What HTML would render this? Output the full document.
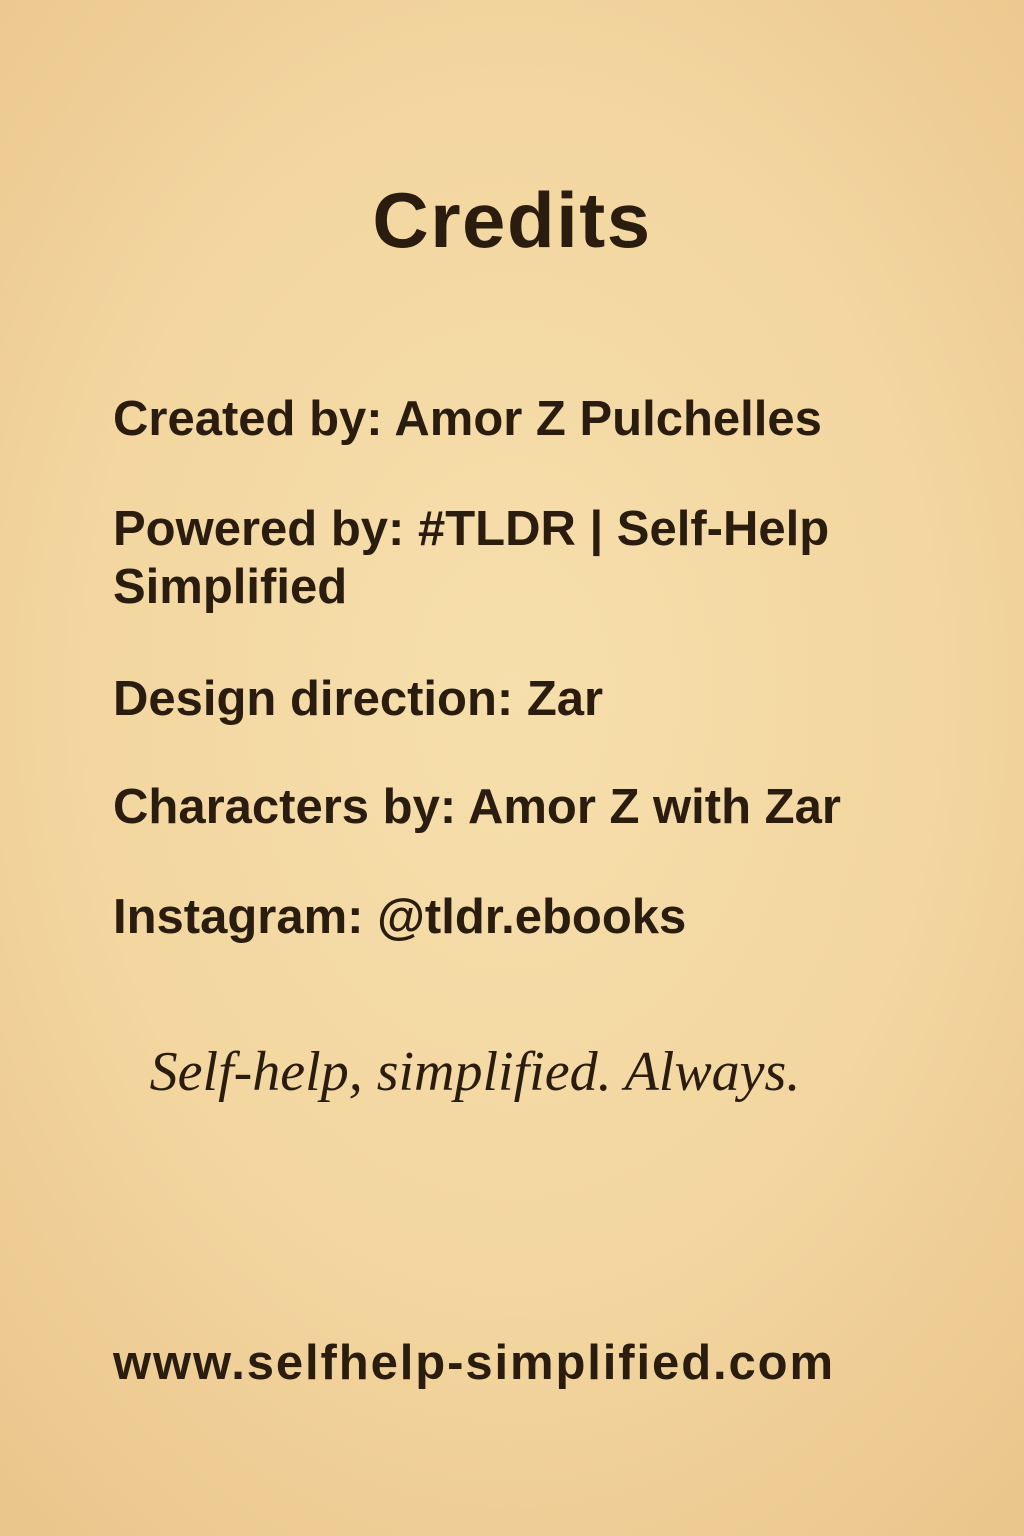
<!DOCTYPE html>
<html><head><meta charset="utf-8"><style>
html,body{margin:0;padding:0}
body{width:1024px;height:1536px;position:relative;overflow:hidden;
background:radial-gradient(ellipse 75% 70% at 50% 45%,#f6dfac 0%,#f3d6a0 55%,#eac68c 100%);
font-family:"Liberation Sans",sans-serif;color:#2a1d10}
.t{position:absolute;white-space:nowrap}
h1{position:absolute;top:181px;left:0;width:1024px;text-align:center;margin:0;font-size:78px;font-weight:bold;line-height:1;letter-spacing:1.5px}
.l{left:113px;font-size:49px;font-weight:bold;line-height:1;letter-spacing:0}
.q{left:0;width:950px;text-align:center;font-family:"Liberation Serif",serif;font-style:italic;font-size:56px;line-height:1}
</style></head><body>
<h1>Credits</h1>
<div class="t l" style="top:395px">Created by: Amor Z Pulchelles</div>
<div class="t l" style="top:505px">Powered by: #TLDR | Self-Help</div>
<div class="t l" style="top:563px">Simplified</div>
<div class="t l" style="top:675px">Design direction: Zar</div>
<div class="t l" style="top:783px">Characters by: Amor Z with Zar</div>
<div class="t l" style="top:893px">Instagram: @tldr.ebooks</div>
<div class="t q" style="top:1044px">Self-help, simplified. Always.</div>
<div class="t l" style="top:1339px;letter-spacing:1.9px">www.selfhelp-simplified.com</div>
</body></html>
